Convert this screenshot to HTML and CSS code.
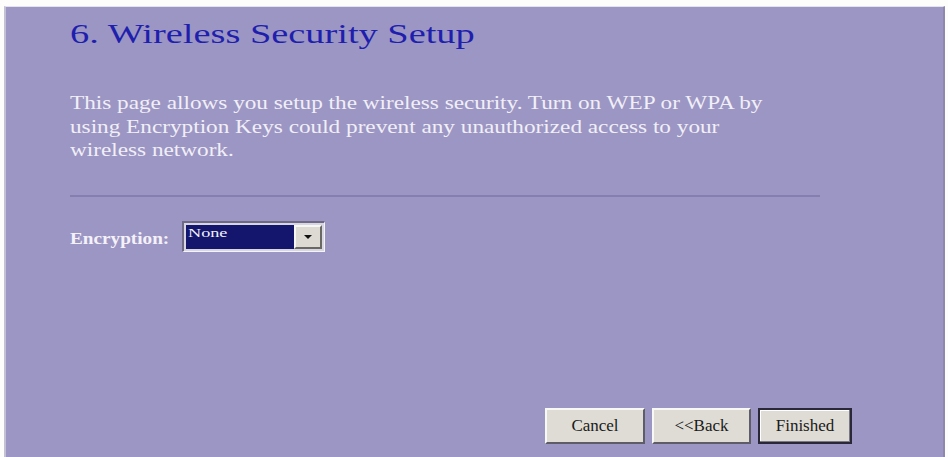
FILE: index.html
```html
<!DOCTYPE html>
<html>
<head>
<meta charset="utf-8">
<title>Wireless Security Setup</title>
<link rel="stylesheet" href="styles.css">
</head>
<body>
<div class="frame">
  <div class="content">
    <h1 class="title">6. Wireless Security Setup</h1>
    <p class="desc">This page allows you setup the wireless security. Turn on WEP or WPA by<br>using Encryption Keys could prevent any unauthorized access to your<br>wireless network.</p>
    <div class="rule"></div>
    <div class="field">
      <span class="label"><span class="wide">Encryption:</span></span>
      <div class="select">
        <div class="select-value"><span class="wide">None</span></div>
        <div class="select-btn"><span class="arrow"></span></div>
      </div>
    </div>
  </div>
  <div class="actions">
    <button class="btn btn-cancel">Cancel</button>
    <button class="btn btn-back">&lt;&lt;Back</button>
    <button class="btn btn-default">Finished</button>
  </div>
</div>
</body>
</html>
```
FILE: styles.css
```css
html, body {
  margin: 0;
  padding: 0;
  background: #fdfdfb;
}
body {
  width: 948px;
  height: 457px;
  overflow: hidden;
  font-family: "Liberation Serif", "Times New Roman", serif;
}
.frame {
  box-sizing: border-box;
  margin: 6px 3px 0 4px;
  height: 451px;
  background: #9c96c4;
  border-top: 1px solid #e4e2ec;
  border-left: 2px solid #c4c1d4;
  border-right: 2px solid #8e89ac;
  display: flex;
  flex-direction: column;
  overflow: hidden;
}
.content {
  padding: 11px 0 0 64px;
  flex: 1;
}
.title {
  width: fit-content;
  margin: 0;
  font-weight: normal;
  font-size: 28px;
  line-height: 32px;
  color: #1f1fae;
  white-space: nowrap;
  transform: scaleX(1.37);
  transform-origin: left center;
}
.desc {
  width: fit-content;
  margin: 42px 0 0;
  font-size: 18px;
  line-height: 23.5px;
  color: #f1eff6;
  white-space: nowrap;
  transform: scaleX(1.29);
  transform-origin: left top;
}
.rule {
  margin-top: 32px;
  width: 750px;
  height: 2px;
  background: #847fae;
}
.field {
  margin-top: 24px;
  display: flex;
  align-items: center;
}
.label {
  width: 112px;
  font-weight: bold;
  font-size: 16px;
  color: #f4f2f8;
  padding-top: 5px;
  white-space: nowrap;
}
.wide {
  display: inline-block;
  transform: scaleX(1.2);
  transform-origin: left center;
}
.select {
  box-sizing: border-box;
  width: 143px;
  height: 31px;
  display: flex;
  padding: 2px;
  background: #d8d6e2;
  border-top: 2px solid #6e6a86;
  border-left: 2px solid #6e6a86;
  border-right: 1px solid #f4f4f6;
  border-bottom: 1px solid #f4f4f6;
}
.select-value {
  flex: 1;
  background: #14166e;
  color: #f2f2fa;
  font-size: 13px;
  line-height: 13px;
  padding: 1px 0 0 2px;
}
.select-value .wide {
  transform: scaleX(1.4);
}
.select-btn {
  box-sizing: border-box;
  width: 28px;
  background: #dcdad2;
  border-top: 2px solid #f6f6f2;
  border-left: 2px solid #f6f6f2;
  border-right: 2px solid #6a6862;
  border-bottom: 2px solid #6a6862;
  display: flex;
  align-items: center;
  justify-content: center;
}
.arrow {
  width: 0;
  height: 0;
  border-left: 4px solid transparent;
  border-right: 4px solid transparent;
  border-top: 4px solid #111;
}
.actions {
  display: flex;
  justify-content: flex-end;
  gap: 7px;
  padding: 0 91px 13px 0;
}
.btn {
  box-sizing: border-box;
  height: 36px;
  margin: 0;
  padding: 0;
  font-family: "Liberation Serif", "Times New Roman", serif;
  font-size: 17px;
  color: #1a1a1a;
  background: #dedcd4;
  border-top: 2px solid #f8f8f4;
  border-left: 2px solid #f8f8f4;
  border-right: 2px solid #5e5c66;
  border-bottom: 2px solid #5e5c66;
}
.btn-cancel { width: 100px; }
.btn-back { width: 99px; }
.btn-default {
  width: 94px;
  border: 2px solid #2a2838;
  box-shadow: inset -1px -1px 0 #7a7884, inset 1px 1px 0 #ffffff;
}
```
